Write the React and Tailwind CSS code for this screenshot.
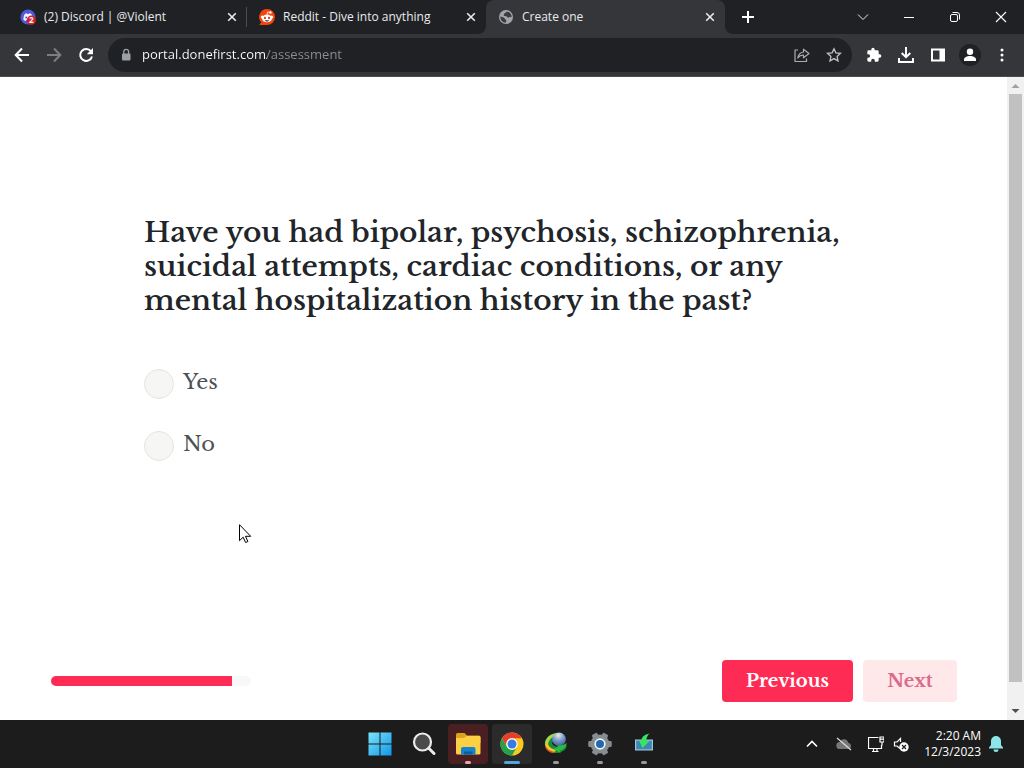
import React from "react";

const Svg = ({ children, className = "size-4", viewBox = "0 0 16 16", ...rest }) => (
  <svg viewBox={viewBox} className={`shrink-0 ${className}`} fill="none" aria-hidden="true" {...rest}>
    {children}
  </svg>
);

const DiscordIcon = () => (
  <Svg>
    <circle cx="8" cy="8" r="7.6" fill="#5059d6" />
    <path d="M3.4 10.8c0-3 .8-5 1.6-5.8 1-.6 1.6-.6 2-.7l.3.7h1.6l.4-.7c.7 0 1.4.3 2 .7.8 1.1 1.5 2.700 1.500 5.800-.8.8-1.600 1-2.300 1.100l-.6-1H6.200l-.6 1c-.8-.1-1.600-.4-2.200-1.100z" fill="#f4f2ff" />
    <circle cx="6.200" cy="8.400" r="1" fill="#5059d6" />
    <circle cx="11.300" cy="11.200" r="4.600" fill="#d31f31" />
    <text x="11.300" y="14" fontSize="8" fontWeight="700" fontFamily="Open Sans, sans-serif" textAnchor="middle" fill="#fff">2</text>
  </Svg>
);

const RedditIcon = () => (
  <Svg>
    <path d="M8 0a8 8 0 1 1 0 16H1.200c-.6 0-.8-.6-.4-1l1.500-1.500A8 8 0 0 1 8 0z" fill="#f4430d" />
    <circle cx="3.300" cy="8" r="1.500" fill="#fff" />
    <circle cx="12.700" cy="8" r="1.500" fill="#fff" />
    <ellipse cx="8" cy="9.400" rx="5" ry="3.900" fill="#fff" />
    <path d="M8 5.600 8.700 3l2 .5" stroke="#fff" strokeWidth=".8" />
    <circle cx="11.400" cy="3.500" r="1.200" fill="#fff" />
    <ellipse cx="6" cy="8.900" rx="1" ry="1.200" fill="#d93a00" />
    <ellipse cx="10" cy="8.900" rx="1" ry="1.200" fill="#d93a00" />
    <path d="M6 11.200h4c-.3 1-1 1.400-2 1.400s-1.700-.4-2-1.400z" fill="#333" />
  </Svg>
);

const GlobeIcon = () => (
  <Svg>
    <circle cx="8" cy="8" r="7" fill="#a1a5aa" />
    <path d="M2.400 7.300c1 1 2.300.8 3.300 1.200 1.400.5.7 1.700 1.900 2 .9.300.8 1.200.5 2.300l-.2.900C4.600 13.600 2.200 11 2.400 7.300zM8.600 2.400c-.2 1-.9 1.300-1.700 1.500-.9.300-.3 1.400-1.200 1.800-.4.3 0 1.100.8 1.200 1.300.1 2.300.2 2.700 1.200.3.800 1.400.6 1.900.2.700-.5 1.500-.3 2.500-.1.300-3-1.800-5.500-5-5.800z" fill="#3a3c40" />
  </Svg>
);

const CloseIcon = () => (
  <Svg stroke="#e8eaed" strokeWidth="1.600">
    <path d="m4.200 4.200 7.600 7.600m0-7.600-7.600 7.600" />
  </Svg>
);

const tabs = [
  { title: "(2) Discord | @Violent", icon: <DiscordIcon /> },
  { title: "Reddit - Dive into anything", icon: <RedditIcon /> },
  { title: "Create one", icon: <GlobeIcon />, active: true },
];

function Tab({ title, icon, active, divided }) {
  return (
    <div
      className={`relative flex h-full min-w-0 max-w-[239px] flex-1 items-center gap-2 pl-3 pr-[7px] text-xs text-[#e8eaed] ${
        active ? "rounded-t-lg bg-[#35363a]" : ""
      }`}
    >
      {active && (
        <>
          <Svg className="absolute bottom-0 -left-2 size-2" viewBox="0 0 8 8"><path d="M8 0v8H0a8 8 0 0 0 8-8z" fill="#35363a" /></Svg>
          <Svg className="absolute bottom-0 -right-2 size-2" viewBox="0 0 8 8"><path d="M0 0v8h8a8 8 0 0 1-8-8z" fill="#35363a" /></Svg>
        </>
      )}
      {icon}
      <button role="tab" aria-selected={!!active} className="min-w-0 flex-1 truncate text-left">{title}</button>
      <button aria-label={`Close ${title}`}><CloseIcon /></button>
      {divided && <span className="absolute right-0 h-5 w-px bg-[#4a4c50]" />}
    </div>
  );
}

function TabStrip() {
  return (
    <header className="flex h-[34px] items-center bg-[#202124] pl-2">
      <div role="tablist" className="flex h-full min-w-0 flex-1">
        {tabs.map((t, i) => <Tab key={t.title} {...t} divided={i === 0} />)}
        <button aria-label="New tab" className="ml-[15px]">
          <Svg stroke="#fff" strokeWidth="2"><path d="M8 2v12M2 8h12" /></Svg>
        </button>
      </div>
      <div className="flex h-7">
        <button aria-label="Search tabs" className="flex w-[46px] items-center justify-center">
          <Svg stroke="#e8eaed"><path d="m3 5.500 5 5 5-5" /></Svg>
        </button>
        <button aria-label="Minimize" className="flex w-[46px] items-center justify-center">
          <Svg stroke="#fff"><path d="M3 8.500h10" /></Svg>
        </button>
        <button aria-label="Restore" className="flex w-[46px] items-center justify-center">
          <Svg stroke="#fff"><rect x="3.500" y="5.500" width="7" height="7" rx="1.500" /><path d="M5.500 3.500H10A2.500 2.500 0 0 1 12.500 6v4.500" /></Svg>
        </button>
        <button aria-label="Close window" className="flex w-[46px] items-center justify-center">
          <Svg stroke="#fff" strokeWidth="1.100"><path d="m3 3 10 10M13 3 3 13" /></Svg>
        </button>
      </div>
    </header>
  );
}

const ToolButton = ({ label, children }) => (
  <button aria-label={label} className="flex size-8 shrink-0 items-center justify-center">{children}</button>
);

function Toolbar() {
  return (
    <nav className="flex h-[43px] items-center border-b border-[#4b4c4f] bg-[#35363a] px-[6px]">
      <ToolButton label="Back">
        <Svg stroke="#fff" strokeWidth="2"><path d="M15 8H2M8 1.500 1.700 8 8 14.500" /></Svg>
      </ToolButton>
      <ToolButton label="Forward">
        <Svg stroke="#7d7e82" strokeWidth="2"><path d="M1 8h13M8 1.500 14.300 8 8 14.500" /></Svg>
      </ToolButton>
      <ToolButton label="Reload">
        <Svg>
          <path d="M13 4.300A6 6 0 1 0 14 9.500" stroke="#fff" strokeWidth="2" />
          <path d="M15 1v6.200H8.800z" fill="#fff" />
        </Svg>
      </ToolButton>
      <form className="mx-[6px] flex h-[34px] min-w-0 flex-1 items-center rounded-full bg-[#202124] pl-[10px] pr-[2px]" onSubmit={(e) => e.preventDefault()}>
        <Svg>
          <rect x="4" y="6.500" width="8.500" height="7" rx="1" fill="#9aa0a6" />
          <path d="M5.800 7V4.800a2.400 2.400 0 0 1 4.800 0V7" stroke="#9aa0a6" strokeWidth="1.300" />
        </Svg>
        <input
          aria-label="Address"
          defaultValue="portal.donefirst.com/assessment"
          className="ml-2 min-w-0 flex-1 bg-[linear-gradient(90deg,#fff_125px,#8b8f94_125px)] bg-clip-text text-[13px] text-transparent outline-none"
        />
        <ToolButton label="Share">
          <Svg stroke="#a9adb2" strokeWidth="1.200" strokeLinejoin="round">
            <path d="M4 3H1v11.500h11.500V11.500M9.500 5V2.200L15 6.500l-5.500 4.300V8C7 8 5.200 8.900 3.800 11c.5-3.400 2.400-5.500 5.700-6z" />
          </Svg>
        </ToolButton>
        <ToolButton label="Bookmark">
          <Svg stroke="#bdc1c6" strokeWidth="1.300">
            <path d="m8 1.700 1.900 4.100 4.600.5-3.400 3.100.9 4.500L8 11.600l-4 2.300.9-4.500-3.400-3.100 4.600-.5z" />
          </Svg>
        </ToolButton>
      </form>
      <ToolButton label="Extensions">
        <Svg viewBox="0 0 24 24">
          <path fill="#fff" d="M20.500 11H19V7a2 2 0 0 0-2-2h-4V3.500a2.500 2.500 0 0 0-5 0V5H4a2 2 0 0 0-2 2v3.800h1.500a2.700 2.700 0 0 1 0 5.400H2V20c0 1.100.9 2 2 2h3.800v-1.500a2.700 2.700 0 0 1 5.400 0V22H17a2 2 0 0 0 2-2v-4h1.500a2.500 2.500 0 0 0 0-5z" />
        </Svg>
      </ToolButton>
      <ToolButton label="Downloads">
        <Svg stroke="#fff" strokeWidth="2"><path d="M8 0v10M3.700 6 8 10.200 12.300 6M1 11v4h14v-4" /></Svg>
      </ToolButton>
      <ToolButton label="Side panel">
        <Svg><path d="M1 1.500h14v13H1zM3 3.500v9h6.500v-9z" fillRule="evenodd" fill="#fff" /></Svg>
      </ToolButton>
      <ToolButton label="Profile">
        <span className="flex size-[22px] items-center justify-center rounded-full bg-[#202124]">
          <Svg><circle cx="8" cy="4.800" r="3.200" fill="#fff" /><path d="M2 14v-1.300c0-2.400 3-3.600 6-3.600s6 1.200 6 3.600V14z" fill="#fff" /></Svg>
        </span>
      </ToolButton>
      <ToolButton label="Menu">
        <Svg><g fill="#fff"><circle cx="8" cy="3" r="1.500" /><circle cx="8" cy="8" r="1.500" /><circle cx="8" cy="13" r="1.500" /></g></Svg>
      </ToolButton>
    </nav>
  );
}

const Option = ({ label }) => (
  <label className="flex items-start gap-[9px] text-[21px] leading-[26px] text-[#4c5154]">
    <input type="radio" name="history" className="size-[30px] appearance-none rounded-full border border-[#e6e4e0] bg-[#f6f6f4] checked:bg-[#fe2c55]" />
    {label}
  </label>
);

function Assessment() {
  return (
    <main className="flex min-w-0 flex-1 flex-col bg-white font-['Libre_Baskerville','Liberation_Serif',serif]">
      <section className="flex-1 px-36 pt-[139px]">
        <h1 id="question" className="text-[28px] font-semibold leading-[34px] text-[#212529]">
          <span className="block whitespace-nowrap">Have you had bipolar, psychosis, schizophrenia,</span>
          <span className="block whitespace-nowrap">suicidal attempts, cardiac conditions, or any</span>
          <span className="block whitespace-nowrap">mental hospitalization history in the past?</span>
        </h1>
        <fieldset aria-labelledby="question" className="mt-[51px] flex flex-col gap-8">
          <Option label="Yes" />
          <Option label="No" />
        </fieldset>
      </section>
      <footer className="flex items-center justify-between pb-[18px] pl-[51px] pr-[50px]">
        <div role="progressbar" aria-label="Progress" aria-valuenow={90} aria-valuemin={0} aria-valuemax={100} className="h-[10px] w-[200px] overflow-hidden rounded-full bg-[#f8f8f8]">
          <div className="h-full bg-[#fe2c55]" style={{ width: "90.5%" }} />
        </div>
        <div className="flex gap-[10px] text-lg font-bold">
          <button className="h-[42px] w-[131px] rounded bg-[#fe2c55] text-white">Previous</button>
          <button disabled className="h-[42px] w-[94px] rounded bg-[#ffe8ea] text-[#dc6a8c]">Next</button>
        </div>
      </footer>
    </main>
  );
}

const Scrollbar = () => (
  <div aria-hidden="true" className="flex w-[17px] shrink-0 flex-col items-center bg-[#f1f1f1]">
    <Svg className="h-[17px] w-[17px]" viewBox="0 0 17 17"><path d="m4.500 11 4-4 4 4z" fill="#a0a0a0" /></Svg>
    <div className="w-[13px] flex-1 bg-[#c1c1c1]" />
    <Svg className="mt-[21px] h-[17px] w-[17px]" viewBox="0 0 17 17"><path d="m4.500 6 4 4 4-4z" fill="#505050" /></Svg>
  </div>
);

const Windows = () => (
  <Svg viewBox="0 0 24 24" className="size-6">
    <defs><linearGradient id="win" x1="0" y1="0" x2="1" y2="1"><stop stopColor="#7be6fb" /><stop offset="1" stopColor="#1195e8" /></linearGradient></defs>
    <path d="M.5.500h11v11H.5zM12.500.500h11v11h-11zM.5 12.500h11v11H.5zM12.500 12.500h11v11h-11z" fill="url(#win)" />
  </Svg>
);

const Search = () => (
  <Svg viewBox="0 0 24 24" className="size-6">
    <circle cx="10.500" cy="10" r="8.500" fill="#4a4a4a" stroke="#ececec" strokeWidth="2.200" />
    <path d="m16.800 16.300 5.200 5.200" stroke="#ececec" strokeWidth="3" strokeLinecap="round" />
  </Svg>
);

const Folder = () => (
  <Svg viewBox="0 0 26 24" className="h-6 w-[26px]">
    <path d="M1 2.500A1.500 1.500 0 0 1 2.500 1h7l2.500 2.500h12A1.500 1.500 0 0 1 25.500 5v6H1z" fill="#e0a21b" />
    <path d="M1 6h8l2.500-2H24a1.500 1.500 0 0 1 1.500 1.500V21a1.500 1.500 0 0 1-1.500 1.500H2.500A1.500 1.500 0 0 1 1 21z" fill="#fccf45" />
    <path d="M6 22.500V17a2 2 0 0 1 2-2h10.500a2 2 0 0 1 2 2v5.500z" fill="#1683cf" />
    <path d="M9 22.500v-3h8.500v3z" fill="#0b5f9f" />
  </Svg>
);

const Chrome = () => (
  <Svg viewBox="0 0 24 24" className="size-6">
    <circle cx="12" cy="12" r="11.500" fill="#fbc91f" />
    <path d="M2 6.200A11.500 11.500 0 0 1 22 6.300H12A5.700 5.700 0 0 0 7 14.900z" fill="#e53e31" />
    <path d="M2 6.200a11.500 11.500 0 0 0 10 17.300l5-8.600a5.700 5.700 0 0 1-10 0z" fill="#23a150" />
    <circle cx="12" cy="12" r="5.700" fill="#fff" /><circle cx="12" cy="12" r="4.500" fill="#357ae8" />
  </Svg>
);

const DownloadManager = () => (
  <Svg viewBox="0 0 24 24" className="size-6">
    <defs><radialGradient id="idm" cx=".45" cy=".2" r=".8"><stop stopColor="#e8f0d8" /><stop offset=".5" stopColor="#7f9bd0" /><stop offset="1" stopColor="#3d5f9a" /></radialGradient></defs>
    <path d="M12 1C5 2.500.5 7 .8 12.500 1.500 18 7 21.500 13 21c5-.5 9-3 10-7.500-5 2.500-12 2.500-15-2z" fill="#178c3c" />
    <path d="M12 1C5.500 2.500 1.500 6 1 11.500l3 1C4.500 8.500 7 5.500 11 4z" fill="#a6d64a" />
    <path d="M3.500 10c.5 5 5 7.500 9 7.500l-2 2.500C5 19.500 1 16 1 12z" fill="#f2c32c" />
    <path d="M1 12c1 5 5 7.500 9.500 8l-1 1.300C4 20.500.8 17 1 12z" fill="#e04d25" />
    <circle cx="15" cy="7.300" r="6.800" fill="url(#idm)" />
    <path d="M11 12.500c4 1.500 8 1 12-1.500-1 4-3.500 6.500-7 7.500l.5 2.500-7-4 5-3z" fill="#28bd42" />
  </Svg>
);

const Gear = () => (
  <Svg viewBox="0 0 24 24" className="size-6">
    <g fill="#868c92">
      <circle cx="12" cy="12" r="9.400" />
      {[30, 90, 150].map((a) => <rect key={a} x="9" y=".3" width="6" height="23.400" rx="1.200" transform={`rotate(${a} 12 12)`} />)}
    </g>
    <circle cx="12" cy="12" r="5.700" fill="#e7f3fc" /><circle cx="12" cy="12" r="4" fill="#2468aa" />
  </Svg>
);

const Updater = () => (
  <Svg viewBox="0 0 24 24" className="size-6">
    <path d="M3 7.500h18v11H3z" fill="#9cc4d8" /><path d="M4.200 8.700h15.600v8.600H4.200z" fill="#3f86b6" />
    <path d="M17.500 1.500c-5 1-8 3.500-8 7H7L10.500 16l7-7h-3.200c0-3 1-5.500 3.200-7.500z" fill="#38e562" />
  </Svg>
);

const apps = [
  { name: "Start", icon: <Windows /> },
  { name: "Search", icon: <Search /> },
  { name: "File Explorer", icon: <Folder />, bg: "bg-[#491f22]", mark: "w-[6px] bg-[#f3a2aa]" },
  { name: "Chrome", icon: <Chrome />, bg: "bg-[#2b2b2b]", mark: "w-4 bg-[#4ca8df]" },
  { name: "Download Manager", icon: <DownloadManager />, mark: "w-[6px] bg-[#9a9a9a]" },
  { name: "Settings", icon: <Gear />, mark: "w-[6px] bg-[#9a9a9a]" },
  { name: "Updater", icon: <Updater />, mark: "w-[6px] bg-[#9a9a9a]" },
];

function Taskbar() {
  return (
    <footer className="grid h-12 grid-cols-[1fr_auto_1fr] items-center bg-[#1c1c1c] text-white">
      <div />
      <div className="flex gap-1">
        {apps.map((a) => (
          <button key={a.name} aria-label={a.name} className={`relative flex size-10 items-center justify-center rounded ${a.bg || ""}`}>
            {a.icon}
            {a.mark && <span className={`absolute bottom-0 h-[3px] rounded-full ${a.mark}`} />}
          </button>
        ))}
      </div>
      <div className="flex items-center justify-end pr-5">
        <button aria-label="Hidden icons" className="mr-4"><Svg stroke="#fff" strokeWidth="1.600"><path d="m3 10.500 5-5 5 5" /></Svg></button>
        <button aria-label="Cloud storage" className="mr-4">
          <Svg><path d="M4 13a3.500 3.500 0 0 1-.3-7 4.500 4.500 0 0 1 8.500.7A3.200 3.200 0 0 1 12.500 13z" fill="#777" /><path d="m1 2 14 12" stroke="#ddd" strokeWidth="1.200" /></Svg>
        </button>
        <button aria-label="Network" className="mr-[9px]">
          <Svg stroke="#fff" strokeWidth="1.200"><path d="M10.500 1.500h-10v11h13V9M4 15.500h6.500M5.500 12.500v3M9 12.500v3M14 6v3.500M12 1h4v5h-4zM12 3.200h4" /></Svg>
        </button>
        <button aria-label="Volume" className="mr-[15px]">
          <Svg stroke="#fff" strokeWidth="1.200"><path d="M7 12.500 4 10H1.500V6H4l3.500-3.500V6" /><circle cx="11" cy="11" r="4.700" fill="#fff" stroke="none" /><path d="m9 9 4 4m0-4-4 4" stroke="#1c1c1c" /></Svg>
        </button>
        <time dateTime="2023-12-03T02:20" className="mr-[7px] whitespace-nowrap text-right text-xs leading-4">2:20 AM<br />12/3/2023</time>
        <button aria-label="Notifications">
          <Svg><path d="M8 0a5 5 0 0 0-5 5v4L1 11.500v1h14v-1L13 9V5a5 5 0 0 0-5-5zM5.500 13.500a2.500 2.500 0 0 0 5 0z" fill="#8ce5e8" /></Svg>
        </button>
      </div>
    </footer>
  );
}

export default function App() {
  return (
    <div className="relative flex min-h-screen flex-col bg-white font-['Segoe_UI','Open_Sans',sans-serif]">
      <TabStrip />
      <Toolbar />
      <div className="flex flex-1">
        <Assessment />
        <Scrollbar />
      </div>
      <Taskbar />
      <Svg className="pointer-events-none absolute left-[239px] top-[524px] h-5 w-[13px]" viewBox="0 0 13 20">
        <path d="M.5.700v16l3.700-3.500 2.400 5.300 2.300-1L6.500 12.300h5.200z" fill="#fff" stroke="#000" />
      </Svg>
    </div>
  );
}
